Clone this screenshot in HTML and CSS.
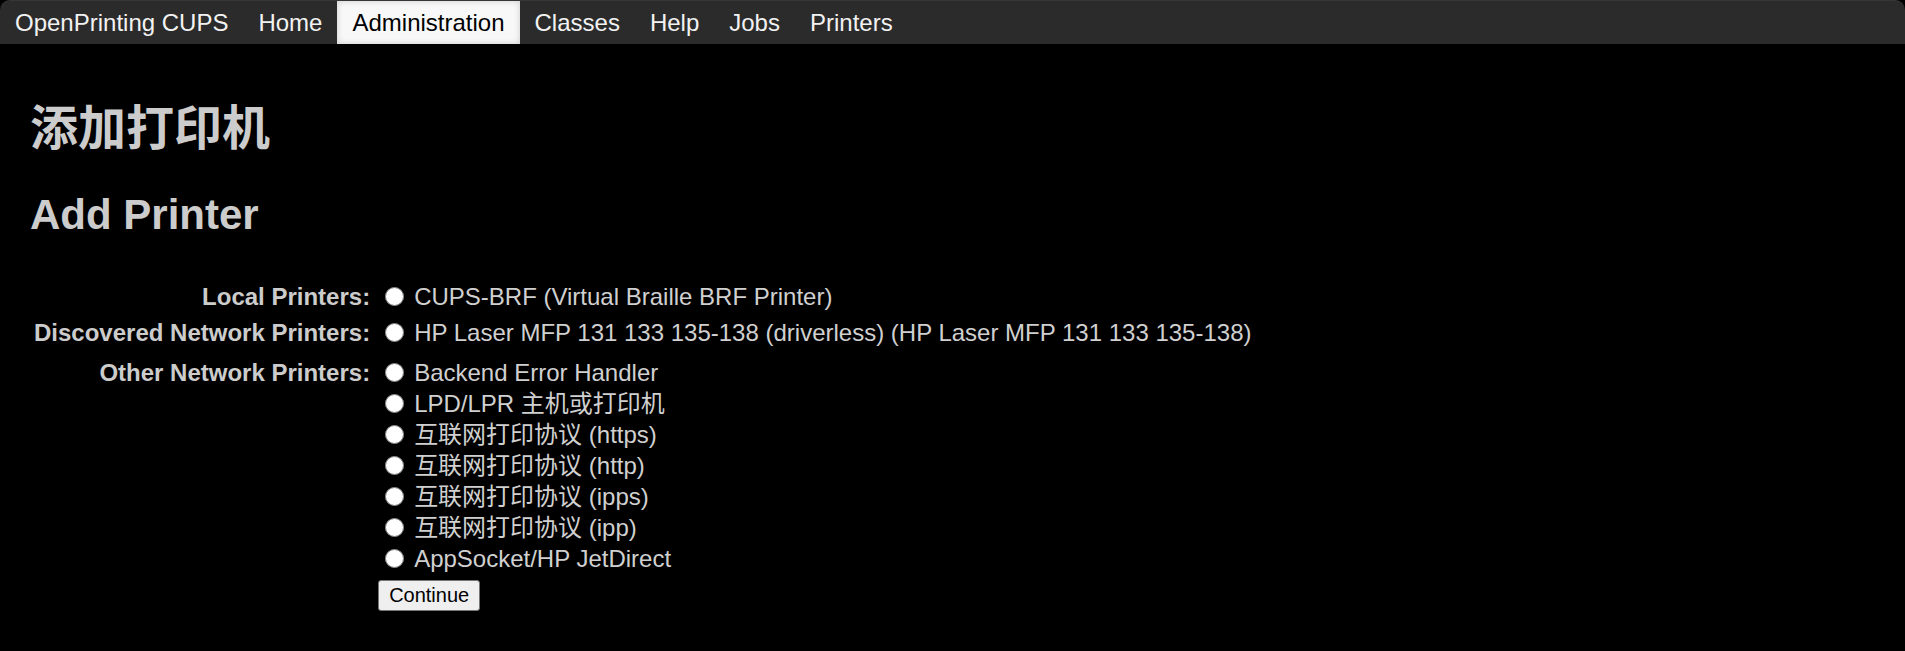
FILE: index.html
```html
<!DOCTYPE html>
<html lang="zh-CN">
<head>
<meta charset="utf-8">
<title>添加打印机 - CUPS</title>
<link rel="stylesheet" href="styles.css">
</head>
<body>
<div class="header">
  <ul class="nav">
    <li class="nav-item"><a href="#">OpenPrinting CUPS</a></li>
    <li class="nav-item"><a href="#">Home</a></li>
    <li class="nav-item active"><a href="#">Administration</a></li>
    <li class="nav-item"><a href="#">Classes</a></li>
    <li class="nav-item"><a href="#">Help</a></li>
    <li class="nav-item"><a href="#">Jobs</a></li>
    <li class="nav-item"><a href="#">Printers</a></li>
  </ul>
</div>
<div class="page">
  <h1 class="title-cn">添加打印机</h1>
  <h2 class="title-en">Add Printer</h2>
  <form class="add-form">
    <table class="form-table">
      <tr class="row-first">
        <th class="label">Local Printers:</th>
        <td class="options">
          <div class="option"><input class="radio" type="radio" name="uri" id="d1"><label for="d1">CUPS-BRF (Virtual Braille BRF Printer)</label></div>
        </td>
      </tr>
      <tr class="row-second">
        <th class="label">Discovered Network Printers:</th>
        <td class="options">
          <div class="option"><input class="radio" type="radio" name="uri" id="d2"><label for="d2">HP Laser MFP 131 133 135-138 (driverless) (HP Laser MFP 131 133 135-138)</label></div>
        </td>
      </tr>
      <tr class="row-third">
        <th class="label">Other Network Printers:</th>
        <td class="options">
          <div class="option"><input class="radio" type="radio" name="uri" id="d3"><label for="d3">Backend Error Handler</label></div>
          <div class="option"><input class="radio" type="radio" name="uri" id="d4"><label for="d4">LPD/LPR 主机或打印机</label></div>
          <div class="option"><input class="radio" type="radio" name="uri" id="d5"><label for="d5">互联网打印协议 (https)</label></div>
          <div class="option"><input class="radio" type="radio" name="uri" id="d6"><label for="d6">互联网打印协议 (http)</label></div>
          <div class="option"><input class="radio" type="radio" name="uri" id="d7"><label for="d7">互联网打印协议 (ipps)</label></div>
          <div class="option"><input class="radio" type="radio" name="uri" id="d8"><label for="d8">互联网打印协议 (ipp)</label></div>
          <div class="option"><input class="radio" type="radio" name="uri" id="d9"><label for="d9">AppSocket/HP JetDirect</label></div>
          <button class="continue" type="button">Continue</button>
        </td>
      </tr>
    </table>
  </form>
</div>
</body>
</html>
```

FILE: styles.css
```css
html, body {
  margin: 0;
  padding: 0;
  background: #000;
}

body {
  font-family: "Liberation Sans", Arial, "Noto Sans CJK SC", sans-serif;
  color: #d0d0d0;
  font-size: 24px;
}

.header {
  background: #2b2b2b;
  border-radius: 10px 10px 0 0;
  border-top: 1px solid #363636;
  height: 43px;
}

.nav {
  display: flex;
  margin: 0;
  padding: 0;
  list-style: none;
  height: 43px;
}

.nav-item a {
  display: block;
  padding: 0 15px;
  height: 43px;
  line-height: 43px;
  color: #f2f2f2;
  text-decoration: none;
  font-size: 24px;
}

.nav-item.active a {
  background: #f8f8f8;
  color: #000;
  box-shadow: inset 0 0 6px rgba(0, 0, 0, 0.18);
}

.page {
  padding: 0 30px;
}

.title-cn {
  margin: 55px 0 0;
  font-size: 48px;
  line-height: 60px;
  font-weight: bold;
  color: #cccccc;
  font-family: "Liberation Sans", "Noto Sans CJK SC", sans-serif;
}

.title-en {
  margin: 32px 0 0;
  font-size: 42px;
  line-height: 48px;
  font-weight: bold;
  color: #cccccc;
}

.add-form {
  margin: 40px 0 0;
}

.form-table {
  border-collapse: collapse;
  border-spacing: 0;
}

.label {
  text-align: right;
  vertical-align: top;
  font-weight: bold;
  font-size: 24px;
  line-height: 31px;
  color: #cccccc;
  padding: 2px 4px;
  white-space: nowrap;
}

.options {
  vertical-align: top;
  padding: 2px 4px;
}

.row-second .label,
.row-second .options {
  padding-top: 3px;
}

.row-third .label,
.row-third .options {
  padding-top: 7px;
}

.option {
  display: flex;
  align-items: center;
  height: 31px;
  white-space: nowrap;
}

.radio {
  width: 19px;
  height: 19px;
  margin: 0 10.5px 0 6.5px;
  flex: none;
}

.option label {
  line-height: 31px;
}

.continue {
  display: block;
  margin-top: 6px;
  height: 31px;
  padding: 0 10px;
  font-family: "Liberation Sans", Arial, sans-serif;
  font-size: 20px;
  color: #000;
  background: #efefef;
  border: 1px solid #767676;
  border-radius: 3px;
}
```
